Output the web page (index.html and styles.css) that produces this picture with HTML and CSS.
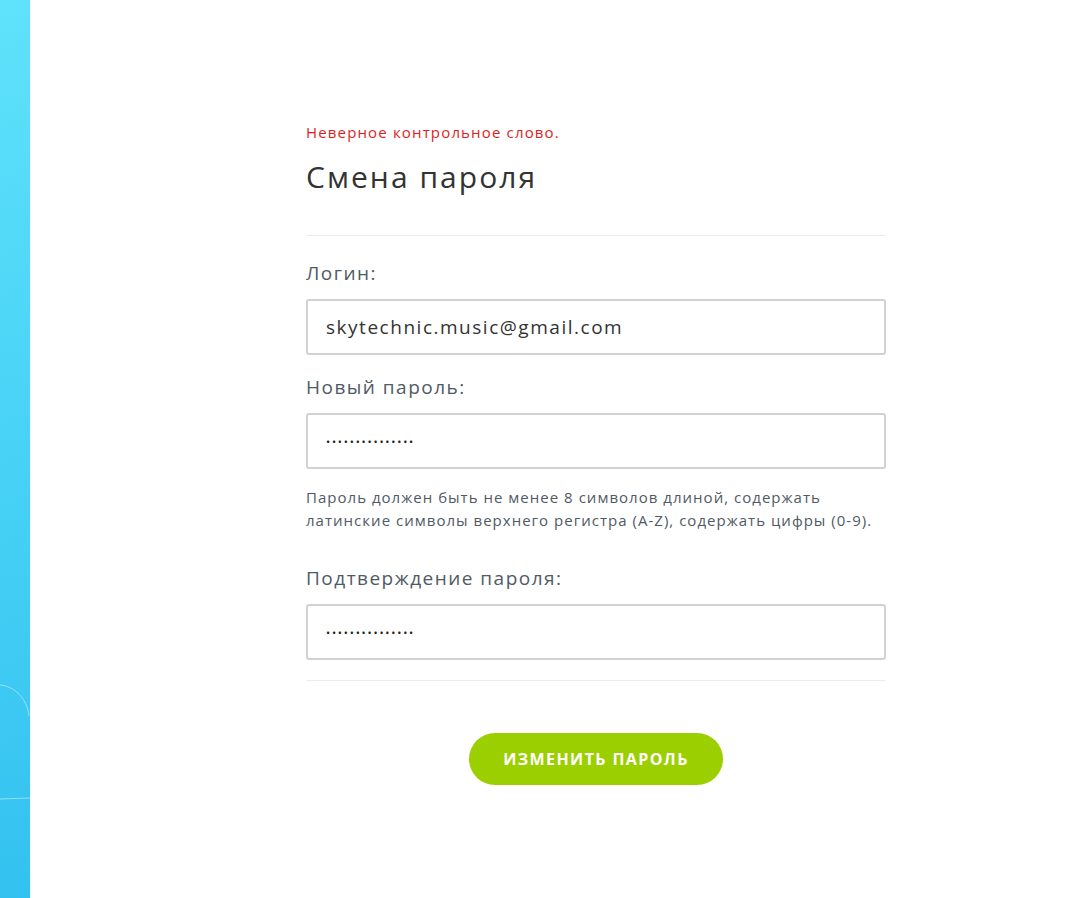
FILE: index.html
```html
<!DOCTYPE html>
<html lang="ru">
<head>
<meta charset="utf-8">
<title>Смена пароля</title>
<link rel="stylesheet" href="styles.css">
</head>
<body>
<div class="page">
  <aside class="strip">
    <svg class="strip-deco" width="30" height="898" viewBox="0 0 30 898">
      <path d="M0 685 C14 686 27 698 29 716" fill="none" stroke="rgba(255,255,255,0.45)" stroke-width="1"/>
      <path d="M0 799 L30 798" fill="none" stroke="rgba(255,255,255,0.45)" stroke-width="1"/>
    </svg>
  </aside>
  <main class="main">
    <form class="form">
      <p class="error">Неверное контрольное слово.</p>
      <h1 class="title">Смена пароля</h1>
      <hr class="divider">
      <label class="label label-first">Логин:</label>
      <div class="input">skytechnic.music@gmail.com</div>
      <label class="label">Новый пароль:</label>
      <div class="input dots">•••••••••••••••</div>
      <p class="hint">Пароль должен быть не менее 8 символов длиной, содержать латинские символы верхнего регистра (A-Z), содержать цифры (0-9).</p>
      <label class="label label-confirm">Подтверждение пароля:</label>
      <div class="input dots">•••••••••••••••</div>
      <hr class="divider divider-bottom">
      <div class="actions">
        <button type="button" class="btn">Изменить пароль</button>
      </div>
    </form>
  </main>
</div>
</body>
</html>
```
FILE: styles.css
```css
* { box-sizing: border-box; }
html, body { margin: 0; padding: 0; background: #fff; }
body { font-family: "Open Sans", "DejaVu Sans", sans-serif; color: #333; }
.page { display: flex; min-height: 898px; }
.strip {
  width: 30px;
  flex: 0 0 30px;
  background: linear-gradient(170deg, #5fe2fb 0%, #48d2f6 50%, #33c1ef 100%);
  position: relative;
  overflow: hidden;
}
.strip-deco { position: absolute; left: 0; top: 0; }
.main { flex: 1; }
.form { width: 580px; margin-left: 276px; padding-top: 120px; }
.error { margin: 0; font-size: 15px; line-height: 24px; color: #e01e1e; letter-spacing: 0.077em; }
.title { margin: 13px 0 0; font-size: 30px; line-height: 40px; font-weight: 500; color: #333; letter-spacing: 0.068em; }
.divider { border: 0; height: 0; border-top: 1px solid #ececec; margin: 38px 0 0; }
.label { display: block; margin-top: 19px; font-size: 19px; line-height: 26px; color: #505a64; letter-spacing: 0.078em; }
.label-first { margin-top: 24px; }
.input {
  margin-top: 13px;
  height: 56px;
  border: 2px solid #d2d2d2;
  border-radius: 3px;
  padding: 0 18px;
  display: flex;
  align-items: center;
  font-size: 19px;
  color: #333;
  letter-spacing: 0.08em;
}
.dots { font-size: 11px; letter-spacing: 1.8px; color: #222; }
.hint { margin: 17px 0 0; font-size: 15px; line-height: 23px; color: #505a64; letter-spacing: 0.068em; }
.label-confirm { margin-top: 33px; }
.divider-bottom { margin-top: 20px; }
.actions { display: flex; justify-content: center; margin-top: 52px; }
.btn {
  width: 254px;
  height: 52px;
  border: 0;
  border-radius: 26px;
  background: #9bcf00;
  color: #fff;
  font-family: inherit;
  font-size: 16px;
  font-weight: 700;
  letter-spacing: 1.4px;
  text-transform: uppercase;
}
```
